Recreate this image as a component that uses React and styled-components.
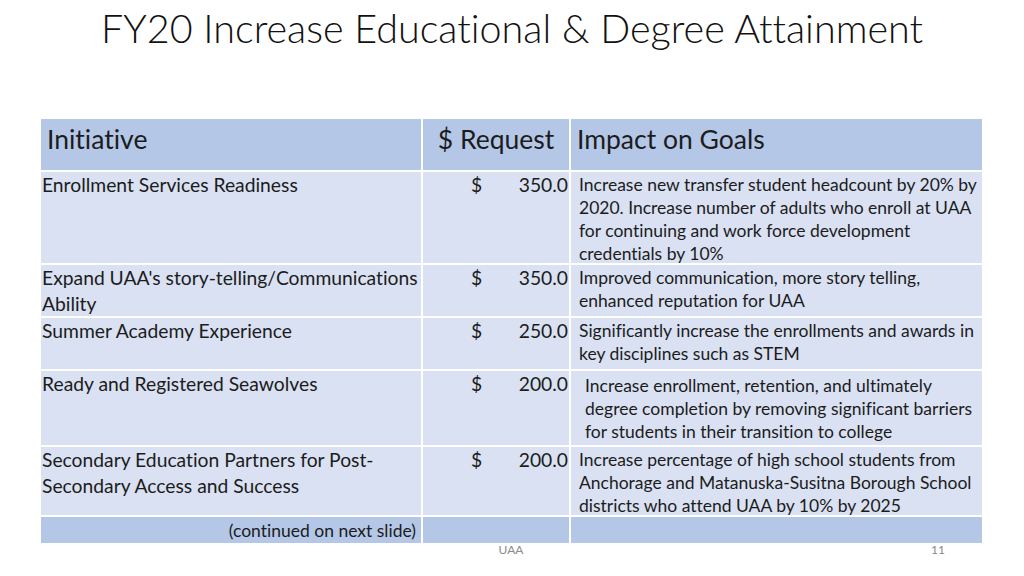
import styled, { createGlobalStyle } from 'styled-components';

const GlobalStyle = createGlobalStyle`
  html, body {
    margin: 0;
    padding: 0;
    background: #ffffff;
  }
  body {
    font-family: Lato, "Open Sans", sans-serif;
    font-variant-ligatures: none;
    color: #1c1c1c;
  }
`;

const rows = [
  {
    name: ['Enrollment Services Readiness'],
    amount: '350.0',
    impact: [
      'Increase new transfer student headcount by 20% by',
      '2020. Increase number of adults who enroll at UAA',
      'for continuing and work force development',
      'credentials by 10%',
    ],
  },
  {
    name: ["Expand UAA's story-telling/Communications", 'Ability'],
    amount: '350.0',
    impact: ['Improved communication, more story telling,', 'enhanced reputation for UAA'],
  },
  {
    name: ['Summer Academy Experience'],
    amount: '250.0',
    impact: ['Significantly increase the enrollments and awards in', 'key disciplines such as STEM'],
  },
  {
    name: ['Ready and Registered Seawolves'],
    amount: '200.0',
    indent: true,
    impact: [
      'Increase enrollment, retention, and ultimately',
      'degree completion by removing significant barriers',
      'for students in their transition to college',
    ],
  },
  {
    name: ['Secondary Education Partners for Post-', 'Secondary Access and Success'],
    amount: '200.0',
    impact: [
      'Increase percentage of high school students from',
      'Anchorage and Matanuska-Susitna Borough School',
      'districts who attend UAA by 10% by 2025',
    ],
  },
];

function Lines({ lines }) {
  return lines.map((line, i) => <Line key={i}>{line}</Line>);
}

export default function App() {
  return (
    <Slide>
      <GlobalStyle />
      <Title>FY20 Increase Educational &amp; Degree Attainment</Title>
      <Table>
        <HeadCell>Initiative</HeadCell>
        <HeadCell $center>$ Request</HeadCell>
        <HeadCell>Impact on Goals</HeadCell>
        {rows.map((row) => (
          <Row key={row.amount + row.name[0]}>
            <NameCell>
              <Lines lines={row.name} />
            </NameCell>
            <AmountCell>
              <span>$</span>
              <span>{row.amount}</span>
            </AmountCell>
            <ImpactCell $indent={row.indent}>
              <Lines lines={row.impact} />
            </ImpactCell>
          </Row>
        ))}
        <FootCell $right>(continued on next slide)</FootCell>
        <FootCell />
        <FootCell />
      </Table>
      <Footer>
        <span />
        <FooterText>UAA</FooterText>
        <PageNumber>11</PageNumber>
      </Footer>
    </Slide>
  );
}

const Slide = styled.div`
  width: 1024px;
  height: 576px;
  overflow: hidden;
  background: #ffffff;
`;

const Title = styled.h1`
  margin: 0;
  padding-top: 5px;
  font-size: 39.5px;
  font-weight: 300;
  line-height: 46px;
  text-align: center;
  color: #111111;
  white-space: nowrap;
`;

const Table = styled.div`
  display: grid;
  grid-template-columns: 380px 146px 411px;
  grid-template-rows: 51px 91px 51px 51px 74px 68px 26px;
  column-gap: 2px;
  row-gap: 2px;
  width: 941px;
  margin: 68px 0 0 41px;
`;

const Row = styled.div`
  display: contents;
`;

const HeadCell = styled.div`
  background: #b4c7e7;
  box-sizing: border-box;
  padding: 5px 6px 0;
  font-size: 26.5px;
  line-height: 30px;
  text-align: ${(p) => (p.$center ? 'center' : 'left')};
  white-space: nowrap;
`;

const NameCell = styled.div`
  background: #d9e1f2;
  box-sizing: border-box;
  padding: 0 0 0 1px;
  font-size: 19.3px;
  line-height: 26px;
`;

const AmountCell = styled.div`
  background: #d9e1f2;
  box-sizing: border-box;
  display: flex;
  justify-content: space-between;
  align-items: flex-start;
  padding: 0 1px 0 48px;
  font-size: 19.3px;
  line-height: 26px;
`;

const ImpactCell = styled.div`
  background: #d9e1f2;
  box-sizing: border-box;
  padding: ${(p) => (p.$indent ? '2.5px 0 0 14px' : '0.5px 0 0 8px')};
  font-size: 17.5px;
  line-height: 23px;
`;

const Line = styled.div`
  white-space: nowrap;
`;

const FootCell = styled.div`
  background: #b4c7e7;
  box-sizing: border-box;
  display: flex;
  align-items: center;
  justify-content: ${(p) => (p.$right ? 'flex-end' : 'flex-start')};
  padding-right: 5px;
  font-size: 17.5px;
  white-space: nowrap;
`;

const Footer = styled.div`
  display: grid;
  grid-template-columns: 452px 118px 1fr;
  font-size: 12px;
  line-height: 14px;
  color: #8a8a8a;
`;

const FooterText = styled.span`
  text-align: center;
`;

const PageNumber = styled.span`
  text-align: right;
  padding-right: 79px;
`;
